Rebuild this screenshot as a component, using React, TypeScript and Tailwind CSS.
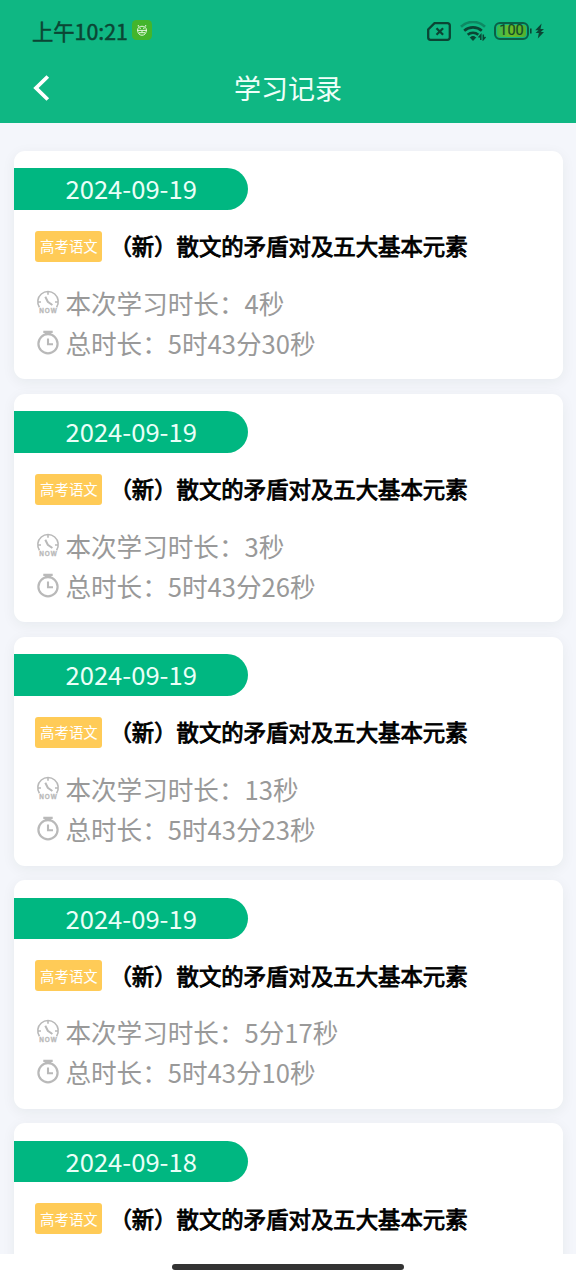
interface StudyRecord {
  id: number;
  date: string;
  subject: string;
  title: string;
  duration?: string;
  total?: string;
}

const TITLE = '（新）散文的矛盾对及五大基本元素';

const records: StudyRecord[] = [
  { id: 1, date: '2024-09-19', subject: '高考语文', title: TITLE, duration: '4秒', total: '5时43分30秒' },
  { id: 2, date: '2024-09-19', subject: '高考语文', title: TITLE, duration: '3秒', total: '5时43分26秒' },
  { id: 3, date: '2024-09-19', subject: '高考语文', title: TITLE, duration: '13秒', total: '5时43分23秒' },
  { id: 4, date: '2024-09-19', subject: '高考语文', title: TITLE, duration: '5分17秒', total: '5时43分10秒' },
  { id: 5, date: '2024-09-18', subject: '高考语文', title: TITLE },
];

function NowClockIcon() {
  return (
    <svg width="24" height="26" viewBox="0 0 24 26" fill="none" stroke="#b9b9b9" className="shrink-0">
      <path d="M3.4 17.2A10.2 10.2 0 1 1 20.6 17.2" strokeWidth="1.6" />
      <path d="M12 1.5v3.2M2 12h3M19 12h3" strokeWidth="1.6" />
      <path d="M9.3 6.8l2.5 5 4.6 3.2" strokeWidth="2" />
      <text
        x="12"
        y="23.4"
        textAnchor="middle"
        fontSize="6.4"
        fontWeight="700"
        fill="#b9b9b9"
        stroke="#b9b9b9"
        strokeWidth=".3"
        textLength="17.5"
        className="font-['Liberation_Sans',sans-serif]"
      >
        NOW
      </text>
    </svg>
  );
}

function StopwatchIcon() {
  return (
    <svg width="24" height="26" viewBox="0 0 24 26" fill="none" stroke="#b9b9b9" className="shrink-0">
      <circle cx="12" cy="13.8" r="9.6" strokeWidth="2.2" />
      <path d="M7.3 1.9h9.4M8.8 3.7h6.4" strokeWidth="2.2" />
      <path d="M12 8.4v5.8h5" strokeWidth="2.1" />
    </svg>
  );
}

function StatusBar() {
  return (
    <div className="flex h-[61px] items-center justify-between pl-8 pr-[30px] text-[#0b4534]">
      <div className="flex items-center gap-[5px]">
        <span className="w-[95px] whitespace-nowrap text-[21.3px] leading-none [-webkit-text-stroke:0.5px_#0b4534]">
          上午10:21
        </span>
        <svg width="20" height="20" viewBox="0 0 20 20" fill="none">
          <rect width="20" height="20" rx="4.5" fill="#43b52c" />
          <path
            d="M6.3 6.6V5M13.7 6.6V5M5.6 10c0-5 8.8-5 8.8 0 0 7-8.8 7-8.8 0ZM5 10.4h10M7 12.7h6M10 10.4v2.3"
            stroke="#e5f8df"
            strokeWidth="1"
          />
          <circle cx="8.2" cy="8.2" r=".7" fill="#e5f8df" />
          <circle cx="11.8" cy="8.2" r=".7" fill="#e5f8df" />
        </svg>
      </div>
      <div className="flex items-center pt-px">
        <svg width="24" height="19" viewBox="0 0 24 19" fill="none" stroke="currentColor" className="mr-[9px]">
          <path d="M7.5 1.2H20.5a2.3 2.3 0 0 1 2.3 2.3v12a2.3 2.3 0 0 1-2.3 2.3h-17a2.3 2.3 0 0 1-2.3-2.3V7.5Z" strokeWidth="2.3" />
          <path d="m9.5 6.2 6.6 6.6M16.1 6.2 9.5 12.8" strokeWidth="2.2" />
        </svg>
        <svg width="27" height="20" viewBox="0 0 27 20" fill="none" stroke="currentColor" className="mr-[7px]">
          <path d="M1 5.7a17.5 17.5 0 0 1 24 0" strokeWidth="2.6" opacity=".4" />
          <path d="M4.2 9.8a13 13 0 0 1 17.6 0" strokeWidth="2.6" />
          <path d="M7.7 13.7a8 8 0 0 1 10.6 0" strokeWidth="2.6" />
          <path d="M10.3 16.5a4 4 0 0 1 5.4 0L13 19.4Z" fill="currentColor" />
          <path d="M20.8 19v-5l-2.2 2.5M23.3 13.5v5l2.2-2.5" strokeWidth="1.5" />
        </svg>
        <div className="flex h-[18px] w-[35px] items-center justify-center rounded-[6px] border-2 border-[#0b5f45] bg-linear-to-r from-[#2fba50] via-[#6bbb26] to-[#4fae30] bg-clip-content p-px font-['Roboto',sans-serif] text-[14.5px] leading-none text-[#12492a] [-webkit-text-stroke:0.2px_#12492a]">
          100
        </div>
        <svg width="17" height="18" viewBox="0 0 17 18" fill="currentColor">
          <path d="M1 6.5h1.6v5H1ZM12.6 1.5 6.2 8.3h3.3L6.6 11h3.2L8.8 16.5l6.2-6.6h-3.2L15 7h-3.5Z" />
        </svg>
      </div>
    </div>
  );
}

function RecordCard({ record }: { record: StudyRecord }) {
  return (
    <div className="h-[228.8px] shrink-0 rounded-[11px] bg-white pt-[17.6px] shadow-[0_3px_14px_rgba(0,50,40,0.06)]">
      <div className="flex h-[41.6px] w-[233.6px] items-center justify-center rounded-r-full bg-[#00b781] pb-[2px] text-[25.6px] leading-none text-[#eafff8]">
        {record.date}
      </div>
      <div className="mt-[21px] flex h-[31px] items-center pl-[21px]">
        <span className="flex h-[31px] w-[67px] items-center justify-center rounded-[3px] bg-[#ffcb57] text-[14.4px] leading-none text-white">
          {record.subject}
        </span>
        <span className="ml-[7px] whitespace-nowrap pb-[2px] text-[22.4px] leading-none text-black [-webkit-text-stroke:0.9px_#000]">
          {record.title}
        </span>
      </div>
      {record.duration && (
        <div className="mt-[21px] pl-[22px] text-[25.6px] leading-10 text-[#999]">
          <div className="flex h-10 items-center gap-[5px]">
            <NowClockIcon />
            <span>本次学习时长：{record.duration}</span>
          </div>
          <div className="flex h-10 items-center gap-[5px]">
            <StopwatchIcon />
            <span>总时长：{record.total}</span>
          </div>
        </div>
      )}
    </div>
  );
}

export default function App() {
  return (
    <div className="flex h-[1280px] w-[576px] flex-col overflow-hidden bg-white font-['Noto_Sans_CJK_SC',sans-serif]">
      <header className="h-[123px] shrink-0 bg-[#0fb783]">
        <StatusBar />
        <div className="grid h-[53px] grid-cols-[80px_1fr_80px] items-center">
          <svg width="18" height="26" viewBox="0 0 18 26" fill="none" className="ml-[33px]">
            <path d="M14.8 1.5 3 13l11.8 11.5" stroke="#fff" strokeWidth="3.8" />
          </svg>
          <h1 className="text-center text-[27px] leading-none text-[#effff9]">学习记录</h1>
        </div>
      </header>

      {/* 学习记录列表 */}
      <main className="flex min-h-0 flex-1 flex-col gap-[14.4px] overflow-hidden bg-[#f4f6fb] pl-[14.4px] pr-[13px] pt-[27.5px]">
        {records.map((record) => (
          <RecordCard key={record.id} record={record} />
        ))}
      </main>

      {/* 底部手势条 */}
      <footer className="flex h-[26px] shrink-0 items-center justify-center">
        <div className="h-[6px] w-[232px] rounded-full bg-[#333]" />
      </footer>
    </div>
  );
}
